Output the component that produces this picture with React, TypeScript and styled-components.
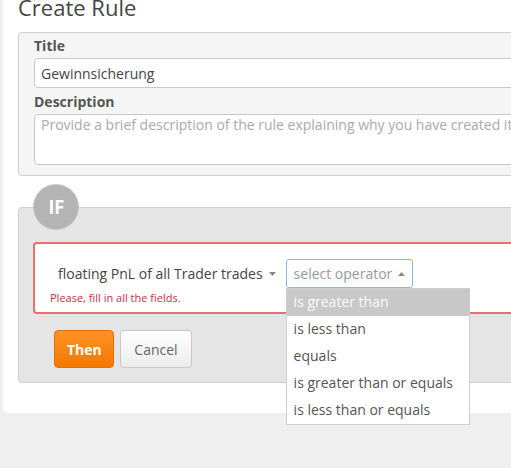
import React from 'react'
import styled, { createGlobalStyle } from 'styled-components'

const GlobalStyle = createGlobalStyle`
  html, body {
    margin: 0;
    padding: 0;
    overflow: hidden;
    background: #efefef;
    font-family: "Open Sans", "Liberation Sans", sans-serif;
    color: #555;
  }
`

const Page = styled.div`
  width: 511px;
  height: 468px;
  padding-left: 3px;
  box-sizing: border-box;
  overflow: hidden;
`

const Card = styled.div`
  width: 640px;
  background: #fff;
  border-bottom-left-radius: 6px;
  padding: 0 0 30px 15px;
  box-sizing: border-box;
`

const Heading = styled.h1`
  margin: -5px 0 13px;
  font-size: 22px;
  line-height: 24px;
  font-weight: 400;
  color: #444;
`

const Fieldset = styled.div`
  background: #f5f5f5;
  border: 1px solid #cfcfcf;
  border-radius: 4px;
  padding: 3px 15px 10px;
`

const Label = styled.div<{ $first?: boolean }>`
  font-size: 14px;
  line-height: 20px;
  font-weight: 700;
  color: #555;
  margin-top: ${(p) => (p.$first ? '0' : '4px')};
`

const Input = styled.div`
  margin-top: 2px;
  height: 30px;
  box-sizing: border-box;
  background: #fff;
  border: 1px solid #c8c8c8;
  border-radius: 4px;
  padding: 1px 6px 0;
  font-size: 14px;
  line-height: 28px;
  color: #444;
  white-space: nowrap;
`

const TextArea = styled.div`
  margin-top: 2px;
  height: 51px;
  box-sizing: border-box;
  background: #fff;
  border: 1px solid #c8c8c8;
  border-radius: 4px;
  padding: 2px 6px;
  font-size: 14px;
  line-height: 16px;
  color: #aaa;
  white-space: nowrap;
`

const IfBox = styled.div`
  position: relative;
  margin-top: 31px;
  background: #e5e5e5;
  border: 1px solid #cfcfcf;
  border-radius: 4px;
  padding: 34px 0 14px 14px;
`

const IfBadge = styled.div`
  position: absolute;
  left: 15px;
  top: -23px;
  width: 44px;
  height: 44px;
  border-radius: 50%;
  background: #b4b4b4;
  box-shadow: 0 0 0 1px #c4c4c4;
  display: flex;
  align-items: center;
  justify-content: center;
  color: #fff;
  font-weight: 700;
  font-size: 19px;
  letter-spacing: -0.5px;
  text-shadow: 0 0 1px rgba(0, 0, 0, 0.15);
`

const ConditionBox = styled.div`
  background: #fff;
  border: 2px solid #e07272;
  border-radius: 4px;
  padding: 15px 0 6px 15px;
`

const Row = styled.div`
  display: flex;
  align-items: center;
`

const Condition = styled.div`
  display: flex;
  align-items: center;
  gap: 6px;
  padding-left: 8px;
  font-size: 14px;
  line-height: 20px;
  color: #444;
  margin-right: 10px;
  white-space: nowrap;
`

const Caret = ({ up }: { up?: boolean }) => (
  <svg width="7" height="4" viewBox="0 0 7 4">
    <path d={up ? 'M0 4 L3.5 0 L7 4 Z' : 'M0 0 L7 0 L3.5 4 Z'} fill="#888" />
  </svg>
)

const SelectWrap = styled.div`
  position: relative;
`

const Select = styled.div`
  height: 29px;
  box-sizing: border-box;
  border: 1px solid #8fb3e6;
  border-radius: 3px;
  padding: 0 7px;
  display: flex;
  align-items: center;
  gap: 6px;
  font-size: 14px;
  color: #999;
  background: #fff;
  white-space: nowrap;
`

const Menu = styled.div`
  position: absolute;
  left: 0;
  top: 29px;
  width: 184px;
  box-sizing: border-box;
  background: #fff;
  border: 1px solid #cfcfcf;
  z-index: 5;
`

const MenuItem = styled.div<{ $active?: boolean }>`
  height: 27px;
  line-height: 26px;
  padding: 0 7px;
  font-size: 14px;
  white-space: nowrap;
  color: ${(p) => (p.$active ? '#fafafa' : '#555')};
  background: ${(p) => (p.$active ? '#c8c8c8' : '#fff')};
`

const ErrorText = styled.div`
  margin-top: 2px;
  font-size: 11px;
  line-height: 16px;
  color: #c9304a;
`

const Buttons = styled.div`
  display: flex;
  gap: 6px;
  margin-top: 16px;
  padding-left: 21px;
`

const Button = styled.button<{ $primary?: boolean }>`
  height: 38px;
  box-sizing: border-box;
  border-radius: 4px;
  font-family: inherit;
  font-size: 14px;
  padding: 0 12px;
  cursor: pointer;
  font-weight: ${(p) => (p.$primary ? 700 : 400)};
  color: ${(p) => (p.$primary ? '#fff' : '#666')};
  border: 1px solid ${(p) => (p.$primary ? '#e26f06' : '#c9c9c9')};
  background: ${(p) =>
    p.$primary
      ? 'linear-gradient(#ff9126, #f47800)'
      : 'linear-gradient(#ffffff, #ececec)'};
  width: ${(p) => (p.$primary ? '60px' : '72px')};
`

const operators = [
  'is greater than',
  'is less than',
  'equals',
  'is greater than or equals',
  'is less than or equals',
]

export default function App() {
  return (
    <Page>
      <GlobalStyle />
      <Card>
        <Heading>Create Rule</Heading>
        <Fieldset>
          <Label $first>Title</Label>
          <Input>Gewinnsicherung</Input>
          <Label>Description</Label>
          <TextArea>
            Provide a brief description of the rule explaining why you have created it
          </TextArea>
        </Fieldset>
        <IfBox>
          <IfBadge>IF</IfBadge>
          <ConditionBox>
            <Row>
              <Condition>
                floating PnL of all Trader trades <Caret />
              </Condition>
              <SelectWrap>
                <Select>
                  select operator <Caret up />
                </Select>
                <Menu>
                  {operators.map((o, i) => (
                    <MenuItem key={o} $active={i === 0}>
                      {o}
                    </MenuItem>
                  ))}
                </Menu>
              </SelectWrap>
            </Row>
            <ErrorText>Please, fill in all the fields.</ErrorText>
          </ConditionBox>
          <Buttons>
            <Button $primary>Then</Button>
            <Button>Cancel</Button>
          </Buttons>
        </IfBox>
      </Card>
    </Page>
  )
}
